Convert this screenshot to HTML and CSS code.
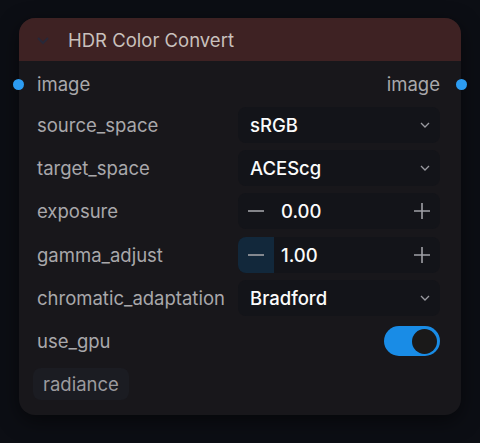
FILE: index.html
```html
<!DOCTYPE html>
<html>
<head>
    <title>HDR Color Convert</title>
    <link rel="stylesheet" href="styles.css">
</head>
<body>
    <div class="node">
        <div class="node-header">
            <svg class="collapse" width="16" height="16" viewBox="0 0 16 16"><path d="M3 6l5 5 5-5" fill="none" stroke="#282838" stroke-width="2"/></svg>
            <span class="title">HDR Color Convert</span>
        </div>
        <div class="node-body">
            <div class="row io">
                <span class="dot dot-left"></span>
                <span class="label">image</span>
                <span class="label">image</span>
                <span class="dot dot-right"></span>
            </div>

            <div class="row">
                <span class="label">source_space</span>
                <div class="widget combo">
                    <span class="value">sRGB</span>
                    <svg width="14" height="14" viewBox="0 0 14 14"><path d="M3 5l4 4 4-4" fill="none" stroke="#9a9aa0" stroke-width="1.3"/></svg>
                </div>
            </div>

            <div class="row">
                <span class="label">target_space</span>
                <div class="widget combo">
                    <span class="value">ACEScg</span>
                    <svg width="14" height="14" viewBox="0 0 14 14"><path d="M3 5l4 4 4-4" fill="none" stroke="#9a9aa0" stroke-width="1.3"/></svg>
                </div>
            </div>

            <div class="row">
                <span class="label">exposure</span>
                <div class="widget number">
                    <span class="step"><svg width="18" height="18" viewBox="0 0 18 18"><path d="M1 9h16" stroke="#a0a0a6" stroke-width="1.6"/></svg></span>
                    <span class="value">0.00</span>
                    <span class="step plus"><svg width="18" height="18" viewBox="0 0 18 18"><path d="M1 9h16M9 1v16" stroke="#a0a0a6" stroke-width="1.6"/></svg></span>
                </div>
            </div>

            <div class="row">
                <span class="label">gamma_adjust</span>
                <div class="widget number">
                    <span class="step active"><svg width="18" height="18" viewBox="0 0 18 18"><path d="M1 9h16" stroke="#a0a0a6" stroke-width="1.6"/></svg></span>
                    <span class="value">1.00</span>
                    <span class="step plus"><svg width="18" height="18" viewBox="0 0 18 18"><path d="M1 9h16M9 1v16" stroke="#a0a0a6" stroke-width="1.6"/></svg></span>
                </div>
            </div>

            <div class="row">
                <span class="label">chromatic_adaptation</span>
                <div class="widget combo">
                    <span class="value">Bradford</span>
                    <svg width="14" height="14" viewBox="0 0 14 14"><path d="M3 5l4 4 4-4" fill="none" stroke="#9a9aa0" stroke-width="1.3"/></svg>
                </div>
            </div>

            <div class="row">
                <span class="label">use_gpu</span>
                <div class="toggle"><span class="knob"></span></div>
            </div>

            <div class="row">
                <span class="badge">radiance</span>
            </div>
        </div>
    </div>
</body>
</html>
```

FILE: styles.css
```css
body {
    margin: 0;
    width: 480px;
    height: 443px;
    background: #0c0e14;
    font-family: Inter, "Noto Sans", sans-serif;
    overflow: hidden;
}

.node {
    margin: 18px 19px 0 19px;
    width: 442px;
    height: 397px;
    background: #18171b;
    border-radius: 16px;
    box-shadow: 0 6px 20px rgba(0, 0, 0, 0.5);
}

.node-header {
    height: 43px;
    background: #3e2223;
    border-radius: 16px 16px 0 0;
    display: flex;
    align-items: center;
    padding-left: 16px;
}

.node-header .collapse {
    margin-right: 17px;
}

.title {
    color: #c9c1bd;
    font-size: 18.5px;
}

.node-body {
    padding: 1px 21px 0 18px;
}

.row {
    height: 43.3px;
    display: flex;
    align-items: center;
    justify-content: space-between;
    position: relative;
}

.row.io {
    height: 44px;
    margin-bottom: -3px;
}

.label {
    color: #a9a8ab;
    font-size: 18.5px;
}

.io .label:last-of-type {
    margin-right: -4px;
}

.dot {
    position: absolute;
    width: 11px;
    height: 11px;
    border-radius: 50%;
    background: #2c9cf2;
    top: 17px;
}

.dot-left {
    left: -24px;
}

.dot-right {
    right: -27px;
}

.widget {
    width: 202px;
    height: 36px;
    background: #131419;
    border-radius: 8px;
    display: flex;
    align-items: center;
    box-sizing: border-box;
}

.value {
    color: #fbfbfb;
    font-size: 18.5px;
    font-weight: 500;
}

.combo {
    justify-content: space-between;
    padding: 0 8px 0 12px;
}

.number .step {
    width: 36px;
    height: 36px;
    display: flex;
    align-items: center;
    justify-content: center;
}

.number .step.active {
    background: #12283b;
    border-radius: 8px 0 0 8px;
}

.number .value {
    flex: 1;
    padding-left: 7px;
}

.toggle {
    width: 56px;
    height: 30px;
    background: #198ce6;
    border-radius: 15px;
    display: flex;
    align-items: center;
    justify-content: flex-end;
    padding-right: 3px;
    box-sizing: border-box;
}

.knob {
    width: 25px;
    height: 25px;
    border-radius: 50%;
    background: #1a1919;
}

.badge {
    background: #1b1c22;
    color: #9b9a9e;
    font-size: 18.5px;
    padding: 5px 10px;
    border-radius: 8px;
    margin-left: -4px;
}
```
